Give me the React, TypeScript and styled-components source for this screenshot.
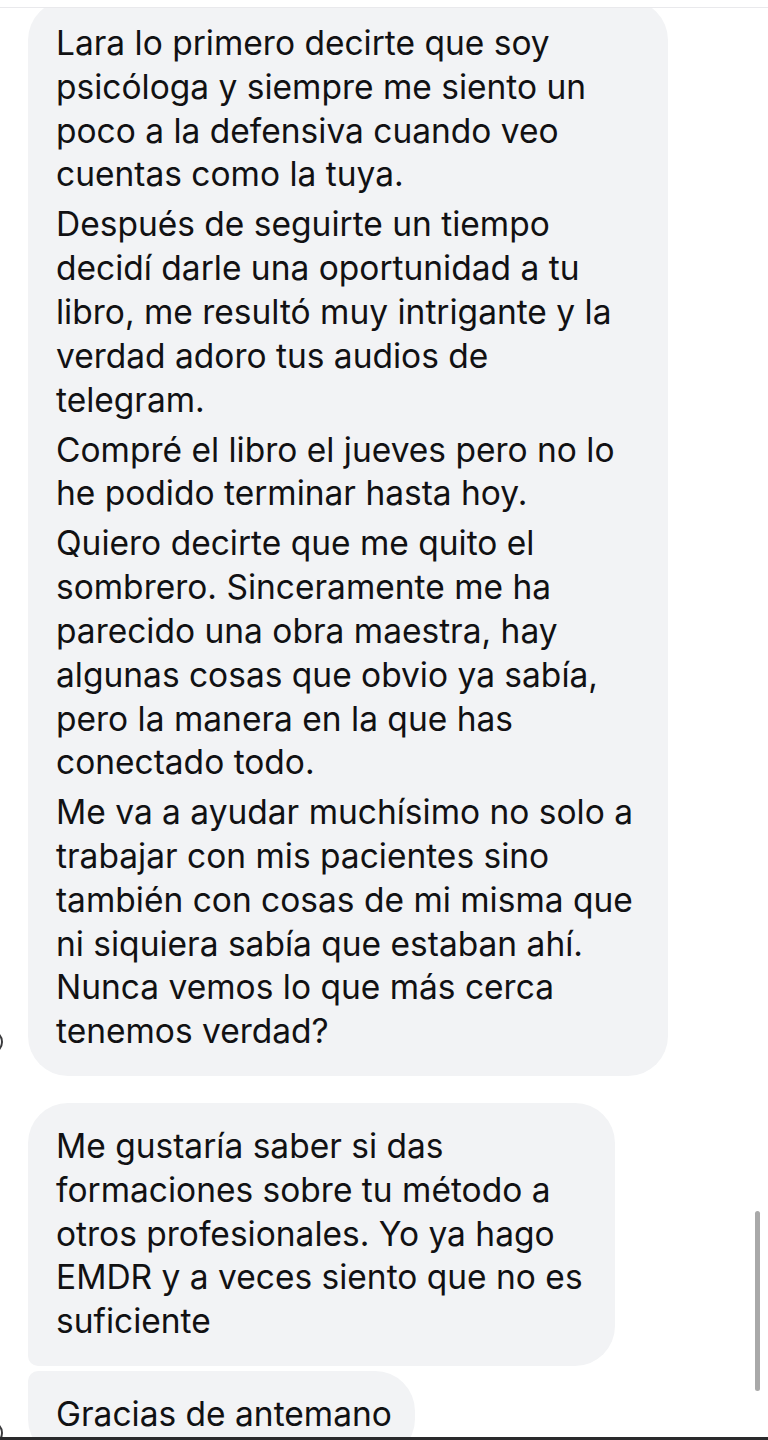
import React from "react";
import styled, { createGlobalStyle } from "styled-components";

const Global = createGlobalStyle`
  html, body { margin: 0; padding: 0; background: #ffffff; }
  body { font-family: Inter, "Noto Sans", sans-serif; -webkit-font-smoothing: antialiased; }
  #root { width: 768px; height: 1440px; overflow: hidden; position: relative; }
`;

const Screen = styled.div`
  position: relative;
  width: 768px;
  height: 1440px;
  overflow: hidden;
  background: #ffffff;
`;

const TopStrip = styled.div`
  position: absolute;
  top: 0;
  left: 0;
  right: 0;
  height: 7px;
  background: #ffffff;
  border-bottom: 1px solid #e9e9ec;
  z-index: 2;
`;

const BottomEdge = styled.div`
  position: absolute;
  left: 0;
  right: 0;
  bottom: 0;
  height: 3px;
  background: #2a2a2c;
  z-index: 2;
`;

const Scrollbar = styled.div`
  position: absolute;
  left: 755px;
  top: 1211px;
  width: 5px;
  height: 180px;
  border-radius: 3px;
  background: #a9a9a9;
  z-index: 2;
`;

const Thread = styled.div`
  display: flex;
  flex-direction: column;
`;

const Row = styled.div<{ $gap: number }>`
  display: flex;
  align-items: flex-end;
  margin-top: ${(p) => p.$gap}px;
`;

const AvatarSlot = styled.div<{ $lift: number }>`
  width: 28px;
  flex: none;
  display: flex;
  align-items: flex-end;
  padding-bottom: ${(p) => p.$lift}px;
`;

const Avatar = styled.div`
  width: 24px;
  height: 24px;
  border-radius: 50%;
  margin-left: -21px;
  background: #ffffff;
  border: 2px solid #3a3a3c;
  box-sizing: border-box;
`;

const Bubble = styled.div<{ $tl: number; $bl: number; $w: number }>`
  width: ${(p) => p.$w}px;
  background: #f2f3f5;
  color: #111113;
  font-family: Inter, "Noto Sans", sans-serif;
  font-size: 33.5px;
  line-height: 43.8px;
  padding: 22px 28px 22px 28px;
  border-radius: ${(p) => p.$tl}px 40px 40px ${(p) => p.$bl}px;
  box-sizing: border-box;
  display: flex;
  flex-direction: column;
  gap: 6.2px;
`;

const Para = styled.div`
  display: flex;
  flex-direction: column;
`;

const Line = styled.span`
  display: block;
  white-space: nowrap;
`;

type P = string[];

const first: P[] = [
  [
    "Lara lo primero decirte que soy",
    "psicóloga y siempre me siento un",
    "poco a la defensiva cuando veo",
    "cuentas como la tuya.",
  ],
  [
    "Después de seguirte un tiempo",
    "decidí darle una oportunidad a tu",
    "libro, me resultó muy intrigante y la",
    "verdad adoro tus audios de",
    "telegram.",
  ],
  ["Compré el libro el jueves pero no lo", "he podido terminar hasta hoy."],
  [
    "Quiero decirte que me quito el",
    "sombrero. Sinceramente me ha",
    "parecido una obra maestra, hay",
    "algunas cosas que obvio ya sabía,",
    "pero la manera en la que has",
    "conectado todo.",
  ],
  [
    "Me va a ayudar muchísimo no solo a",
    "trabajar con mis pacientes sino",
    "también con cosas de mi misma que",
    "ni siquiera sabía que estaban ahí.",
    "Nunca vemos lo que más cerca",
    "tenemos verdad?",
  ],
];

const second: P[] = [
  [
    "Me gustaría saber si das",
    "formaciones sobre tu método a",
    "otros profesionales. Yo ya hago",
    "EMDR y a veces siento que no es",
    "suficiente",
  ],
];

const third: P[] = [["Gracias de antemano"]];

const Paras = ({ items }: { items: P[] }) => (
  <>
    {items.map((p, i) => (
      <Para key={i}>
        {p.map((l, j) => (
          <Line key={j}>{l}</Line>
        ))}
      </Para>
    ))}
  </>
);

export default function App() {
  return (
    <Screen>
      <Global />
      <TopStrip />
      <Thread>
        <Row $gap={0}>
          <AvatarSlot $lift={22}>
            <Avatar />
          </AvatarSlot>
          <Bubble $tl={40} $bl={40} $w={640}>
            <Paras items={first} />
          </Bubble>
        </Row>
        <Row $gap={27}>
          <AvatarSlot $lift={0} />
          <Bubble $tl={40} $bl={10} $w={587}>
            <Paras items={second} />
          </Bubble>
        </Row>
        <Row $gap={5}>
          <AvatarSlot $lift={14}>
            <Avatar />
          </AvatarSlot>
          <Bubble $tl={10} $bl={40} $w={387}>
            <Paras items={third} />
          </Bubble>
        </Row>
      </Thread>
      <Scrollbar />
      <BottomEdge />
    </Screen>
  );
}
